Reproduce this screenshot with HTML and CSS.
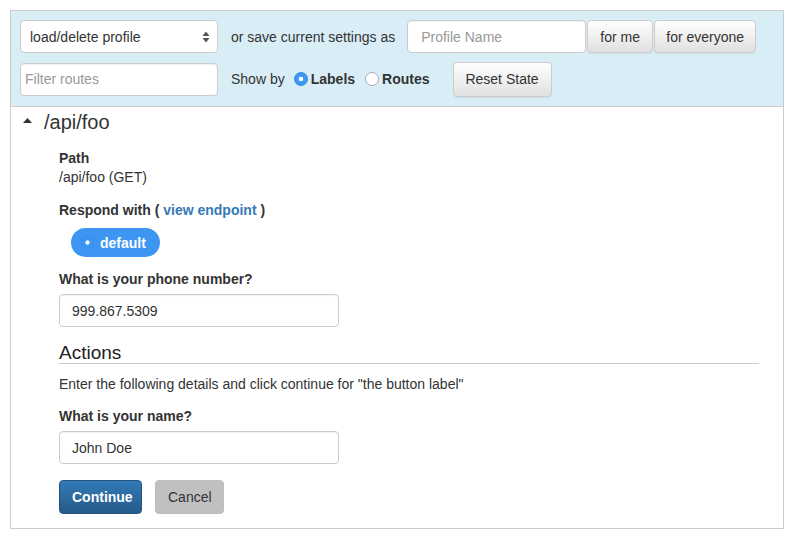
FILE: index.html
```html
<!DOCTYPE html>
<html>
<head>
<meta charset="utf-8">
<link rel="stylesheet" href="styles.css">
</head>
<body>
<div class="panel">
  <div class="toolbar">
    <div class="row">
      <div class="select">
        <span>load/delete profile</span>
        <svg class="arrows" width="8" height="12" viewBox="0 0 8 12"><path d="M4 0.5 L7.5 5 L0.5 5 Z" fill="#555"/><path d="M4 11.5 L7.5 7 L0.5 7 Z" fill="#555"/></svg>
      </div>
      <span class="txt save-txt">or save current settings as</span>
      <div class="input profile ph">Profile Name</div>
      <button class="btn btn-me">for me</button>
      <button class="btn btn-all">for everyone</button>
    </div>
    <div class="row row2">
      <div class="input filter ph">Filter routes</div>
      <span class="txt showby">Show by</span>
      <span class="radio on"></span><b class="rlabel">Labels</b>
      <span class="radio off"></span><b class="rlabel">Routes</b>
      <button class="btn reset">Reset State</button>
    </div>
  </div>
  <div class="body">
    <div class="route-head">
      <svg class="caret" width="9" height="5" viewBox="0 0 9 5"><path d="M4.5 0 L9 5 L0 5 Z" fill="#333"/></svg>
      <span class="route">/api/foo</span>
    </div>
    <div class="content">
      <div class="label">Path</div>
      <div class="line">/api/foo (GET)</div>
      <div class="label respond">Respond with ( <a class="link">view endpoint</a> )</div>
      <div class="pills">
        <span class="pill"><span class="pill-radio"></span>default</span>
      </div>
      <div class="label q1">What is your phone number?</div>
      <div class="input field">999.867.5309</div>
      <h3 class="actions">Actions</h3>
      <p class="desc">Enter the following details and click continue for "the button label"</p>
      <div class="label q2">What is your name?</div>
      <div class="input field">John Doe</div>
      <div class="btns">
        <button class="btn-primary">Continue</button>
        <button class="btn-cancel">Cancel</button>
      </div>
    </div>
  </div>
</div>
</body>
</html>
```
FILE: styles.css
```css
* { box-sizing: border-box; }
html, body { margin: 0; padding: 0; background: #fff; }
body {
  font-family: "Liberation Sans", Arial, sans-serif;
  font-size: 14px;
  color: #333;
  padding: 10px 15px 0 10px;
}
.panel {
  width: 774px;
  border: 1px solid #ccc;
}
.toolbar {
  background: #d9edf7;
  border-bottom: 1px solid #ccc;
  padding: 9px 9px 10px 9px;
}
.row {
  display: flex;
  align-items: center;
  height: 33px;
}
.row2 { margin-top: 9px; height: 34px; }
.select {
  width: 198px;
  height: 33px;
  background: #fff;
  border: 1px solid #ccc;
  border-radius: 4px;
  display: flex;
  align-items: center;
  justify-content: space-between;
  padding: 0 7px 0 9px;
  color: #333;
}
.arrows { display: block; }
.txt { color: #333; }
.save-txt { margin-left: 13px; }
.input {
  background: #fff;
  border: 1px solid #ccc;
  border-radius: 4px;
  height: 33px;
  display: flex;
  align-items: center;
  box-shadow: inset 0 1px 1px rgba(0,0,0,0.06);
}
.ph { color: #999; }
.profile { width: 179px; margin-left: 12px; padding-left: 13px; }
.filter { width: 198px; padding-left: 4px; }
.btn {
  font-family: inherit;
  font-size: 14px;
  color: #333;
  height: 33px;
  border: 1px solid #ccc;
  border-radius: 4px;
  background: linear-gradient(#fff, #e0e0e0);
  box-shadow: 0 1px 1px rgba(0,0,0,0.06);
  padding: 0 11px;
  cursor: pointer;
}
.btn-me { margin-left: 1px; width: 66px; }
.btn-all { margin-left: 1px; width: 102px; }
.reset { height: 35px; width: 99px; margin-left: 23px; }
.showby { margin-left: 13px; }
.radio {
  width: 14px;
  height: 14px;
  border-radius: 50%;
  display: inline-block;
  flex: none;
}
.radio.on {
  margin-left: 9px;
  background: radial-gradient(circle, #fff 0 2px, #3d98f5 2.6px);
  border: 1px solid #3288e8;
}
.radio.off {
  margin-left: 10px;
  background: #fff;
  border: 1px solid #aaa;
}
.rlabel { margin-left: 3px; font-weight: bold; }
.body { padding: 1px 24px 14px 12px; }
.route-head {
  display: flex;
  align-items: center;
  height: 28px;
}
.caret { margin-left: 0; margin-top: -4px; }
.route { font-size: 20px; margin-left: 12px; line-height: 28px; }
.content { padding-left: 36px; }
.label { font-weight: bold; line-height: 19px; }
.line { line-height: 19px; }
.content > .label:first-child { margin-top: 13px; }
.respond { margin-top: 14px; }
.link { color: #337ab7; text-decoration: none; }
.pills { margin-top: 8px; padding-left: 12px; }
.pill {
  display: inline-flex;
  align-items: center;
  height: 29px;
  width: 89px;
  border-radius: 15px;
  background: #3d97f2;
  color: #fff;
  font-weight: bold;
  padding-left: 10px;
}
.pill-radio {
  width: 13px;
  height: 13px;
  border-radius: 50%;
  border: 1px solid #3088ec;
  background: radial-gradient(circle, #fff 0 1.8px, #3d97f2 2.4px);
  margin-right: 6px;
}
.q1 { margin-top: 13px; }
.field { width: 280px; margin-top: 5px; padding-left: 12px; color: #333; }
.actions {
  font-size: 19px;
  font-weight: normal;
  color: #222;
  margin: 16px 0 0 0;
  line-height: 20px;
  border-bottom: 1px solid #ccc;
  padding-bottom: 0;
}
.desc { margin: 11px 0 0 0; line-height: 19px; }
.q2 { margin-top: 13px; }
.btns { margin-top: 16px; display: flex; gap: 13px; }
.btn-primary, .btn-cancel {
  font-family: inherit;
  font-size: 14px;
  height: 34px;
  border-radius: 4px;
  padding: 0 12px;
}
.btn-primary {
  width: 83px;
  color: #fff;
  font-weight: bold;
  background: linear-gradient(#337ab7, #265a88);
  border: 1px solid #245580;
}
.btn-cancel {
  width: 69px;
  color: #333;
  background: #c0c0c0;
  border: 1px solid #bdbdbd;
}
```
